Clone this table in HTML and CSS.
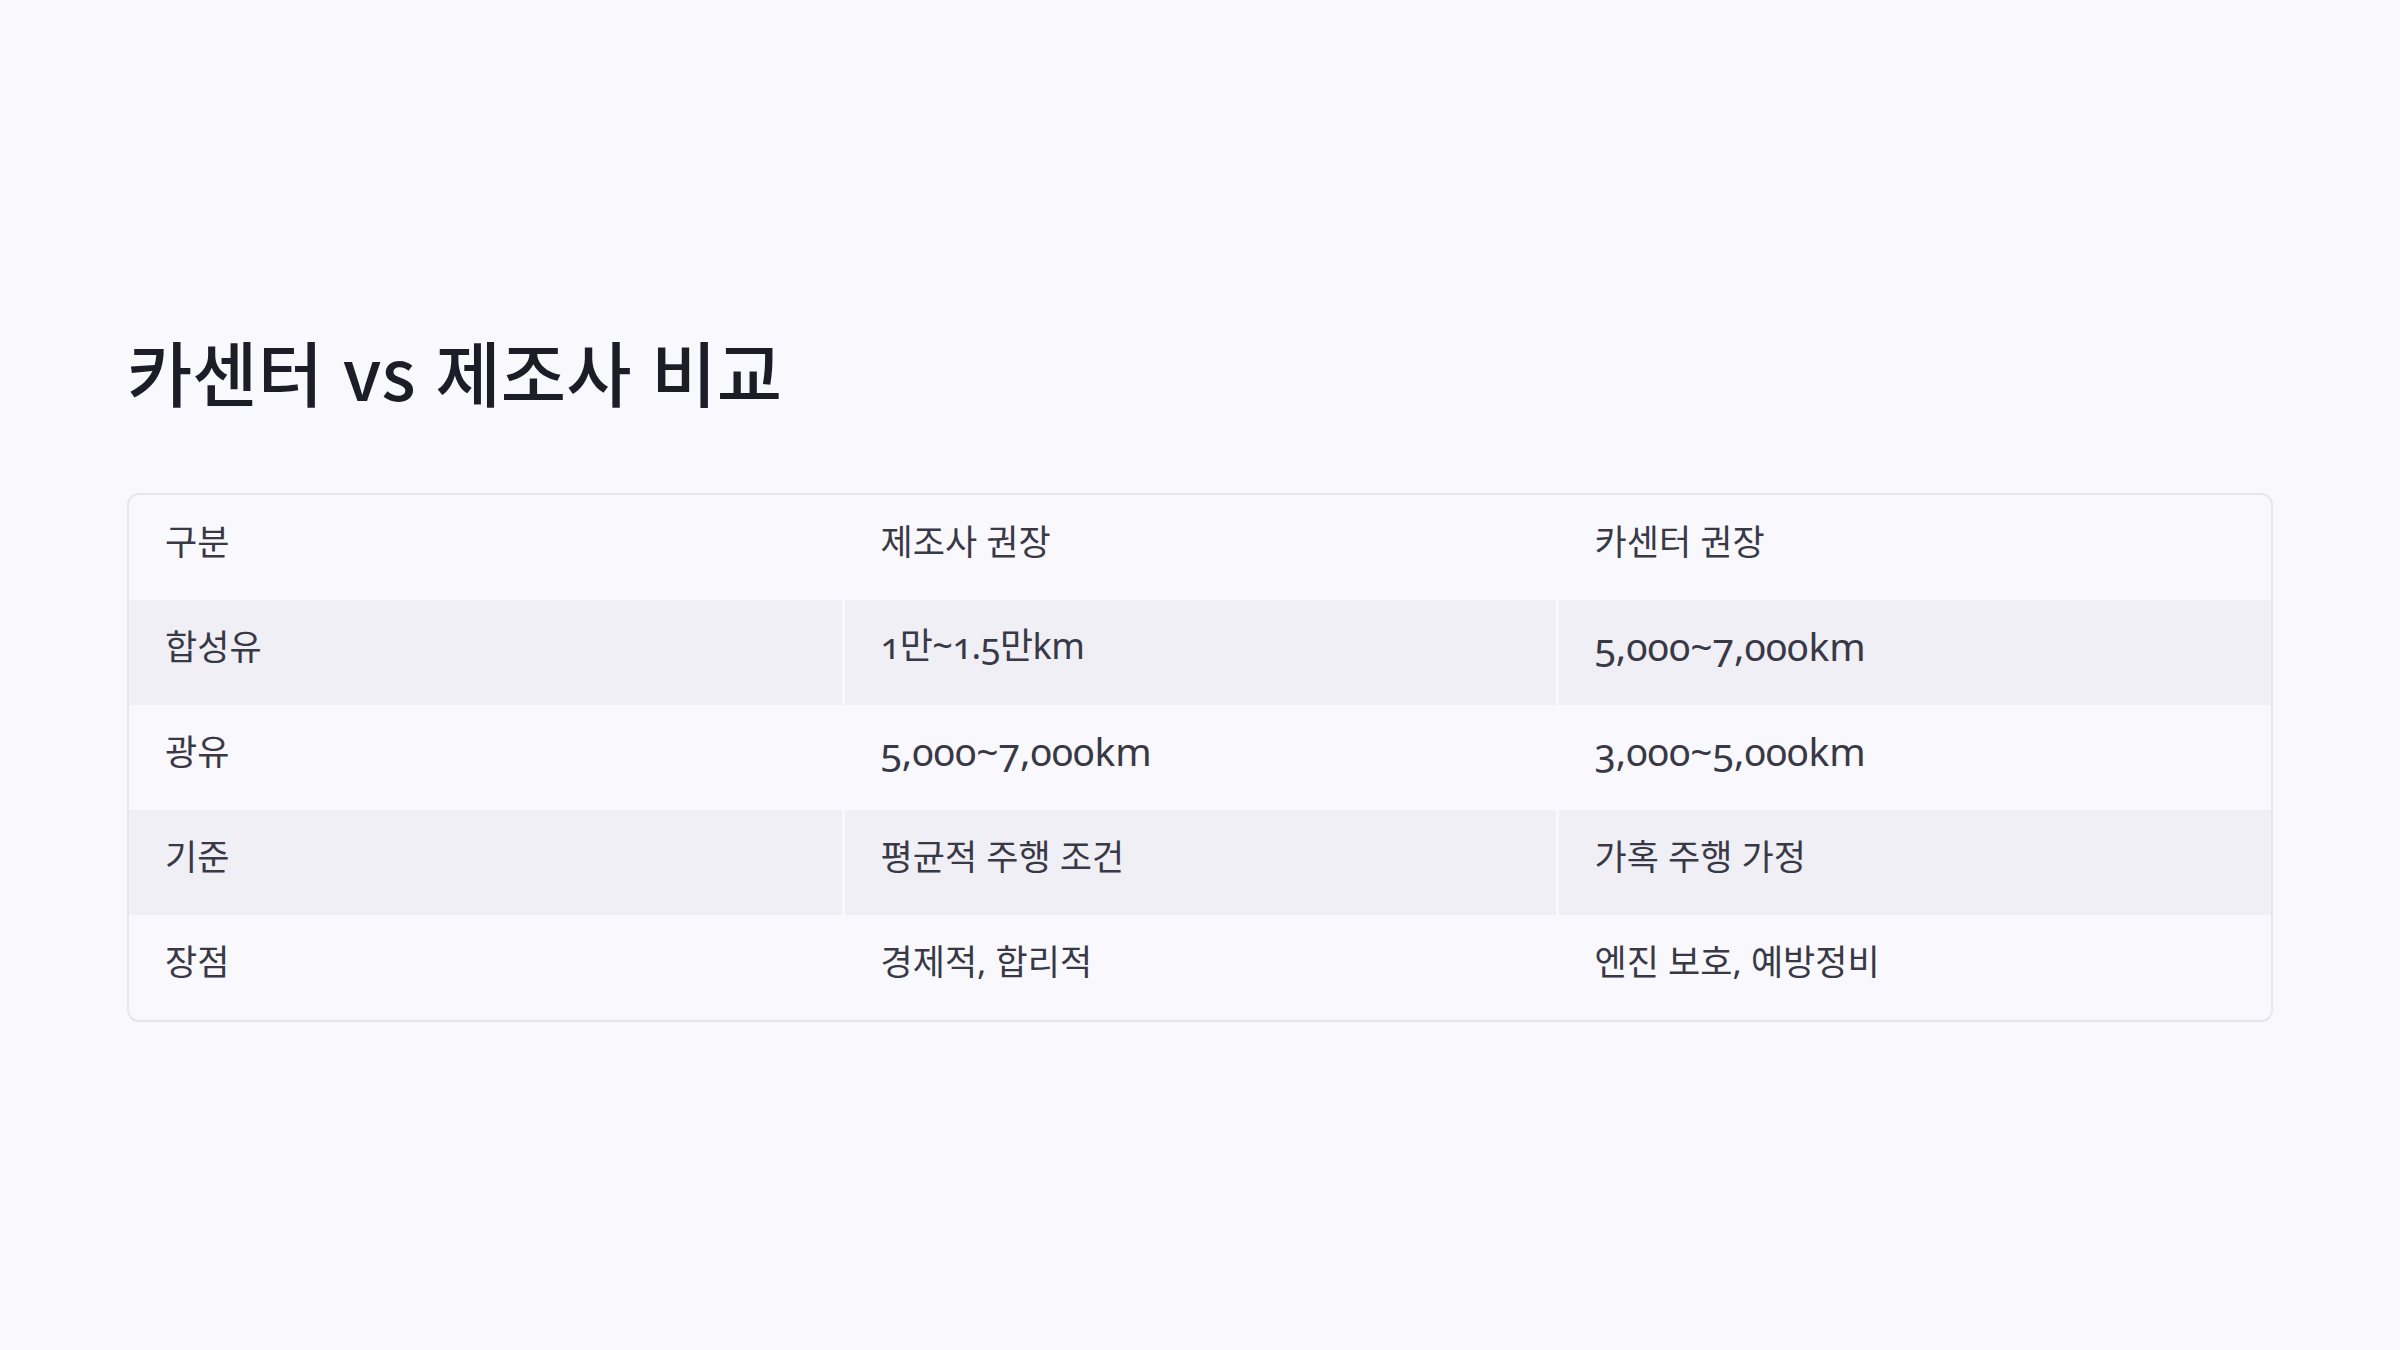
FILE: index.html
```html
<!DOCTYPE html>
<html lang="ko">
<head>
    <meta charset="UTF-8">
    <meta name="viewport" content="width=device-width, initial-scale=1.0">
    <title>카센터 vs 제조사 비교</title>
    <link rel="stylesheet" href="styles.css">
</head>
<body>
    <div class="slide">
        <h1>카센터 vs 제조사 비교</h1>
        <div class="table-wrap">
            <table class="compare">
                <thead>
                    <tr>
                        <th>구분</th>
                        <th>제조사 권장</th>
                        <th>카센터 권장</th>
                    </tr>
                </thead>
                <tbody>
                    <tr>
                        <td>합성유</td>
                        <td class="mixed">1만~1.5만km</td>
                        <td><span class="num">5,000~7,000km</span></td>
                    </tr>
                    <tr>
                        <td>광유</td>
                        <td><span class="num">5,000~7,000km</span></td>
                        <td><span class="num">3,000~5,000km</span></td>
                    </tr>
                    <tr>
                        <td>기준</td>
                        <td>평균적 주행 조건</td>
                        <td>가혹 주행 가정</td>
                    </tr>
                    <tr>
                        <td>장점</td>
                        <td>경제적, 합리적</td>
                        <td>엔진 보호, 예방정비</td>
                    </tr>
                </tbody>
            </table>
        </div>
    </div>
</body>
</html>
```

FILE: styles.css
```css
body {
    margin: 0;
    padding: 0;
    background-color: #f8f8fd;
    font-family: "Noto Sans", "Noto Sans CJK KR", sans-serif;
    color: #393946;
}
.slide {
    padding: 328px 127px 0;
}
h1 {
    margin: 0 0 81px;
    font-family: "Noto Sans CJK KR", sans-serif;
    font-size: 71px;
    font-weight: 500;
    line-height: 84px;
    color: #1d1d27;
}
.table-wrap {
    border: 2px solid #e5e5ec;
    border-radius: 12px;
    overflow: hidden;
}
.compare {
    width: 100%;
    border-collapse: collapse;
    table-layout: fixed;
}
.compare tr {
    height: 105px;
}
.compare th,
.compare td {
    padding: 0 36px 12px;
    text-align: left;
    font-size: 35px;
    font-weight: 400;
    line-height: 1.4;
    border-right: 3px solid #f8f8fd;
}
.compare th:last-child,
.compare td:last-child {
    border-right: none;
}
.compare .num {
    font-size: 39px;
    font-variant-numeric: oldstyle-nums;
}
.compare .mixed {
    font-size: 36px;
    letter-spacing: -0.5px;
    font-variant-numeric: oldstyle-nums;
}
.compare thead tr {
    background-color: #f8f8fd;
}
.compare tbody tr:nth-child(odd) {
    background-color: #efeff5;
}
.compare tbody tr:nth-child(even) {
    background-color: #f8f8fd;
}
```
